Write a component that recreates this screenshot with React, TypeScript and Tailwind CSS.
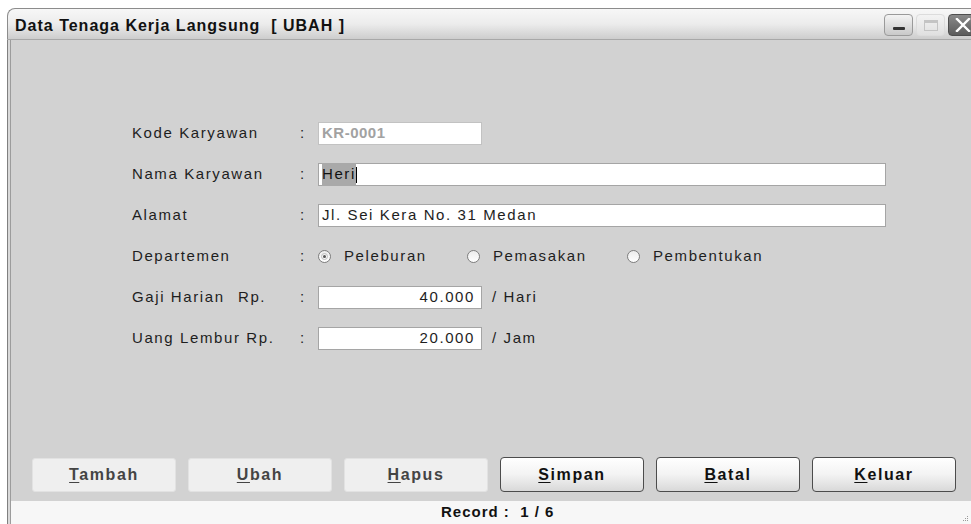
import React from "react";

type BtnProps = { label: string; enabled?: boolean };

function ActionButton({ label, enabled }: BtnProps) {
  const first = label.charAt(0);
  const rest = label.slice(1);
  return (
    <div
      className={
        enabled
          ? "w-[144px] h-[35px] flex items-center justify-center rounded-[4px] border border-[#4c4c4c] bg-gradient-to-b from-[#ffffff] via-[#f3f3f3] to-[#d9d9d9] shadow-[inset_0_1px_0_#ffffff] text-[16px] font-bold tracking-[1.6px] text-[#111]"
          : "w-[144px] h-[34px] flex items-center justify-center rounded-[3px] border border-[#e2e2e2] bg-[#efefef] text-[16px] font-bold tracking-[1.6px] text-[#444]"
      }
    >
      <span>
        <span className="underline underline-offset-[2px]">{first}</span>
        {rest}
      </span>
    </div>
  );
}

function Radio({ checked, label }: { checked?: boolean; label: string }) {
  return (
    <div className="flex items-center">
      <div className="w-[13px] h-[13px] rounded-full border border-[#7d7d7d] bg-gradient-to-b from-[#ececec] to-[#ffffff] flex items-center justify-center">
        {checked && (
          <div className="w-[7px] h-[7px] rounded-full border border-[#bdbdbd] flex items-center justify-center">
            <div className="w-[3px] h-[3px] rounded-full bg-[#555]" />
          </div>
        )}
      </div>
      <span className="ml-[13px]">{label}</span>
    </div>
  );
}

function Row({ label, children }: { label: React.ReactNode; children: React.ReactNode }) {
  return (
    <div className="h-[23px] flex items-center">
      <div className="w-[168px]">{label}</div>
      <div className="w-[18px]">:</div>
      {children}
    </div>
  );
}

const input = "h-[23px] bg-white border border-[#a5a5a5] flex items-center px-[3px]";

export default function App() {
  return (
    <div className="w-[971px] h-[524px] bg-white overflow-hidden font-['Liberation_Sans',Arial,sans-serif] text-[#1e1e1e]">
      <div className="ml-[7px] pt-[8px] h-[524px] flex flex-col">
        {/* title bar */}
        <div className="h-[31px] shrink-0 flex rounded-tl-[8px] border-t border-l border-[#8c8c8c] bg-gradient-to-b from-[#f7f7f7] via-[#ececec] to-[#cdcdcd]">
          <span className="pl-[7px] mt-[5px] text-[16px] font-bold tracking-[1px] text-[#111] whitespace-pre">
            Data Tenaga Kerja Langsung  [ UBAH ]
          </span>
          <div className="ml-auto mr-[-6px] mt-[5px] flex gap-[3px]">
            {/* minimize */}
            <div className="w-[29px] h-[22px] rounded-[4px] border border-[#9a9a9a] bg-gradient-to-b from-[#f4f4f4] to-[#c9c9c9] flex items-end justify-center pb-[5px]">
              <div className="w-[12px] h-[3px] bg-[#333] rounded-[1px]" />
            </div>
            {/* maximize (disabled) */}
            <div className="w-[29px] h-[22px] rounded-[4px] border border-[#dcdcdc] bg-gradient-to-b from-[#f3f3f3] to-[#e0e0e0] flex items-center justify-center">
              <div className="w-[14px] h-[11px] border border-[#c4c4c4] border-t-[3px]" />
            </div>
            {/* close */}
            <div className="w-[29px] h-[22px] rounded-l-[4px] border border-[#4e4e4e] bg-gradient-to-b from-[#8a8a8a] to-[#5c5c5c] flex items-center justify-center">
              <svg width="16" height="14" viewBox="0 0 16 14">
                <path d="M2 1 L14 13 M14 1 L2 13" stroke="#ffffff" strokeWidth="2.4" strokeLinecap="square" />
              </svg>
            </div>
          </div>
        </div>
        <div className="h-[1px] shrink-0 bg-[#a8a8a8]" />

        {/* window body */}
        <div className="flex-1 flex border-l border-[#808080]">
          <div className="w-[2px] bg-[#d9d9d9]" />
          <div className="flex-1 flex flex-col border-l border-[#9c9c9c]">
            <div className="flex-1 bg-[#d2d2d2] flex flex-col">
              {/* form */}
              <div className="pt-[82px] pl-[121px] flex flex-col gap-[18px] text-[15px] tracking-[1.6px]">
                <Row label="Kode Karyawan">
                  <div className={input + " w-[164px] bg-[#f6f6f6] border-[#c2c2c2]"}>
                    <span className="font-bold text-[#a2a2a2] tracking-[0.5px]">KR-0001</span>
                  </div>
                </Row>
                <Row label="Nama Karyawan">
                  <div className={input + " w-[568px]"}>
                    <span className="bg-[#a9a9a9] text-[#111]">Heri</span>
                    <span className="w-[1px] h-[16px] bg-black" />
                  </div>
                </Row>
                <Row label="Alamat">
                  <div className={input + " w-[568px]"}>
                    <span>Jl. Sei Kera No. 31 Medan</span>
                  </div>
                </Row>
                <Row label="Departemen">
                  <div className="flex items-center">
                    <div className="w-[149px]">
                      <Radio checked label="Peleburan" />
                    </div>
                    <div className="w-[160px]">
                      <Radio label="Pemasakan" />
                    </div>
                    <Radio label="Pembentukan" />
                  </div>
                </Row>
                <Row
                  label={
                    <span className="flex">
                      <span className="w-[106px]">Gaji Harian</span>
                      <span>Rp.</span>
                    </span>
                  }
                >
                  <div className={input + " w-[164px] justify-end pr-[6px]"}>
                    <span>40.000</span>
                  </div>
                  <span className="ml-[10px]">/ Hari</span>
                </Row>
                <Row label="Uang Lembur Rp.">
                  <div className={input + " w-[164px] justify-end pr-[6px]"}>
                    <span>20.000</span>
                  </div>
                  <span className="ml-[10px]">/ Jam</span>
                </Row>
              </div>

              {/* action buttons */}
              <div className="mt-auto mb-[9px] pl-[21px] flex items-center gap-[12px]">
                <ActionButton label="Tambah" />
                <ActionButton label="Ubah" />
                <ActionButton label="Hapus" />
                <ActionButton label="Simpan" enabled />
                <ActionButton label="Batal" enabled />
                <ActionButton label="Keluar" enabled />
              </div>
            </div>

            {/* status bar */}
            <div className="h-[23px] shrink-0 bg-[#f7f7f7] relative flex items-center">
              <span className="pl-[430px] text-[15px] font-bold tracking-[1px] text-[#111] whitespace-pre">
                Record :  1 / 6
              </span>
              <svg className="absolute right-[2px] bottom-[2px]" width="8" height="8" viewBox="0 0 8 8">
                <rect x="6" y="2" width="1" height="1" fill="#9a9a9a" />
                <rect x="4" y="4" width="1" height="1" fill="#9a9a9a" />
                <rect x="6" y="4" width="1" height="1" fill="#9a9a9a" />
                <rect x="2" y="6" width="1" height="1" fill="#9a9a9a" />
                <rect x="4" y="6" width="1" height="1" fill="#9a9a9a" />
                <rect x="6" y="6" width="1" height="1" fill="#9a9a9a" />
              </svg>
            </div>
          </div>
        </div>
      </div>
    </div>
  );
}
